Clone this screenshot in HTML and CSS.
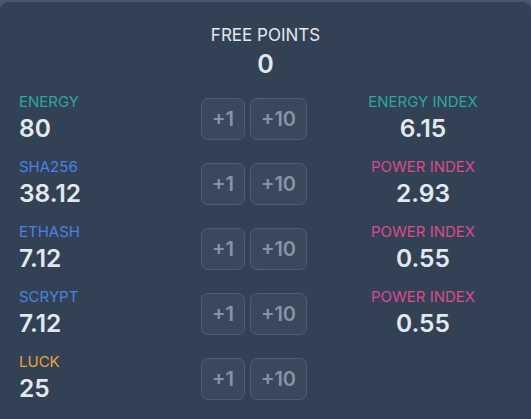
FILE: index.html
```html
<!DOCTYPE html>
<html>
<head>
<meta charset="utf-8">
<link rel="stylesheet" href="styles.css">
</head>
<body>
<div class="card">
  <div class="header">
    <div class="free-label">FREE POINTS</div>
    <div class="free-value">0</div>
  </div>
  <div class="rows">
    <div class="row">
      <div class="stat"><div class="label teal">ENERGY</div><div class="value">80</div></div>
      <div class="btns"><button class="btn b1">+1</button><button class="btn b10">+10</button></div>
      <div class="index"><div class="label teal">ENERGY INDEX</div><div class="value">6.15</div></div>
    </div>
    <div class="row">
      <div class="stat"><div class="label blue">SHA256</div><div class="value">38.12</div></div>
      <div class="btns"><button class="btn b1">+1</button><button class="btn b10">+10</button></div>
      <div class="index"><div class="label pink">POWER INDEX</div><div class="value">2.93</div></div>
    </div>
    <div class="row">
      <div class="stat"><div class="label blue">ETHASH</div><div class="value">7.12</div></div>
      <div class="btns"><button class="btn b1">+1</button><button class="btn b10">+10</button></div>
      <div class="index"><div class="label pink">POWER INDEX</div><div class="value">0.55</div></div>
    </div>
    <div class="row">
      <div class="stat"><div class="label blue">SCRYPT</div><div class="value">7.12</div></div>
      <div class="btns"><button class="btn b1">+1</button><button class="btn b10">+10</button></div>
      <div class="index"><div class="label pink">POWER INDEX</div><div class="value">0.55</div></div>
    </div>
    <div class="row">
      <div class="stat"><div class="label orange">LUCK</div><div class="value">25</div></div>
      <div class="btns"><button class="btn b1">+1</button><button class="btn b10">+10</button></div>
      <div class="index"></div>
    </div>
  </div>
</div>
</body>
</html>
```
FILE: styles.css
```css
html, body {
  margin: 0;
  padding: 0;
  background: #4a586b;
  font-family: Inter, "Noto Sans", sans-serif;
}
.card {
  margin-top: 2px;
  min-height: calc(100vh - 2px);
  box-sizing: border-box;
  background: #334155;
  border-radius: 8px 8px 0 0;
  padding: 21px 19px 0 19px;
  color: #e2e8f0;
}
.header {
  text-align: center;
}
.free-label {
  font-size: 17px;
  line-height: 24px;
  color: #e2e8f0;
}
.free-value {
  font-size: 25px;
  line-height: 30px;
  font-weight: 600;
  margin-top: 2px;
}
.rows {
  display: flex;
  flex-direction: column;
  gap: 12px;
  margin-top: 12px;
}
.row {
  display: grid;
  grid-template-columns: 182px 106px 1fr;
  align-items: start;
}
.label {
  font-size: 15px;
  line-height: 21px;
}
.value {
  font-size: 24.5px;
  line-height: 32px;
  font-weight: 600;
  color: #e2e8f0;
}
.teal { color: #2aa89b; }
.blue { color: #4b82e2; }
.pink { color: #dc4a90; }
.orange { color: #eba23c; }
.btns {
  display: flex;
  gap: 5px;
  margin-top: 7px;
}
.btn {
  height: 42px;
  box-sizing: border-box;
  border: 1px solid #4f5d70;
  background: #3a485c;
  border-radius: 7px;
  color: #8793a5;
  font-family: Inter, "Noto Sans", sans-serif;
  font-size: 20px;
  font-weight: 600;
  padding: 0;
}
.b1 { width: 44px; }
.b10 { width: 57px; }
.index {
  text-align: center;
  padding-left: 27px;
}
```
